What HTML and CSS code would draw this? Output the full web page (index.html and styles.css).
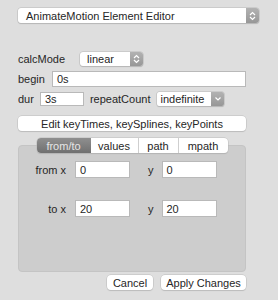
FILE: index.html
```html
<!DOCTYPE html>
<html>
<head>
<meta charset="utf-8">
<link rel="stylesheet" href="styles.css">
</head>
<body>
<div class="win">
  <div class="popup main-popup">
    <span class="popup-text">AnimateMotion Element Editor</span>
    <span class="arrow"><svg width="7" height="10" viewBox="0 0 7 10"><path d="M1 4 L3.5 1.5 L6 4 M1 6 L3.5 8.5 L6 6" fill="none" stroke="#fff" stroke-width="1.2"/></svg></span>
  </div>

  <div class="form">
    <div class="row r-calc">
      <span class="lbl">calcMode</span>
      <div class="popup calc-popup">
        <span class="popup-text">linear</span>
        <span class="arrow"><svg width="7" height="10" viewBox="0 0 7 10"><path d="M1 4 L3.5 1.5 L6 4 M1 6 L3.5 8.5 L6 6" fill="none" stroke="#fff" stroke-width="1.2"/></svg></span>
      </div>
    </div>
    <div class="row r-begin">
      <span class="lbl">begin</span>
      <div class="field begin-field">0s</div>
    </div>
    <div class="row r-dur">
      <span class="lbl">dur</span>
      <div class="field dur-field">3s</div>
      <span class="lbl rc-lbl">repeatCount</span>
      <div class="combo">
        <span class="combo-text">indefinite</span>
        <span class="arrow"><svg width="8" height="6" viewBox="0 0 8 6"><path d="M1.5 1.5 L4 4 L6.5 1.5" fill="none" stroke="#fff" stroke-width="1.2"/></svg></span>
      </div>
    </div>
    <div class="btn wide-btn">Edit keyTimes, keySplines, keyPoints</div>

    <div class="tabs">
      <span class="tab sel">from/to</span>
      <span class="tab">values</span>
      <span class="tab">path</span>
      <span class="tab last">mpath</span>
    </div>
    <div class="panel">
      <div class="prow">
        <span class="plbl">from x</span>
        <div class="field pf">0</div>
        <span class="ylbl">y</span>
        <div class="field pf">0</div>
      </div>
      <div class="prow to-row">
        <span class="plbl">to x</span>
        <div class="field pf">20</div>
        <span class="ylbl">y</span>
        <div class="field pf">20</div>
      </div>
    </div>

    <div class="actions">
      <div class="btn cancel">Cancel</div>
      <div class="btn apply">Apply Changes</div>
    </div>
  </div>
</div>
</body>
</html>
```

FILE: styles.css
```css
html, body {
  margin: 0;
  padding: 0;
  background: #dedede;
  font-family: "Liberation Sans", Arial, sans-serif;
  font-size: 11px;
  color: #262626;
}
.win {
  width: 278px;
  height: 300px;
  padding-top: 8px;
  box-sizing: border-box;
}
.popup, .combo {
  display: flex;
  align-items: stretch;
  background: #fff;
  border-radius: 3px;
  box-shadow: 0 0 0 0.5px #b8b8b8, 0 1px 1px rgba(0,0,0,0.18);
  overflow: hidden;
  box-sizing: border-box;
}
.popup-text, .combo-text {
  flex: 1;
  display: flex;
  align-items: center;
  white-space: nowrap;
}
.arrow {
  width: 13px;
  display: flex;
  align-items: center;
  justify-content: center;
  background: linear-gradient(#b2b2b2, #979797);
}
.main-popup {
  margin-left: 18px;
  width: 241px;
  height: 15px;
}
.main-popup .popup-text {
  padding-left: 8px;
  font-size: 11px;
}
.form {
  margin-left: 18px;
  width: 228px;
  display: flex;
  flex-direction: column;
}
.row {
  display: flex;
  align-items: center;
}
.lbl {
  font-size: 11px;
  white-space: nowrap;
}
.r-calc {
  margin-top: 29px;
  height: 14px;
}
.calc-popup {
  margin-left: 15px;
  width: 63px;
  height: 14px;
}
.calc-popup .popup-text {
  padding-left: 7px;
  font-size: 11px;
}
.field {
  background: #fff;
  border: 1px solid #b9b9b9;
  box-sizing: border-box;
  font-size: 11px;
  display: flex;
  align-items: center;
  padding-left: 4px;
}
.r-begin {
  margin-top: 5px;
}
.begin-field {
  margin-left: 7px;
  width: 194px;
  height: 16px;
}
.r-dur {
  margin-top: 5px;
}
.dur-field {
  margin-left: 6px;
  width: 44px;
  height: 14px;
}
.rc-lbl {
  margin-left: 6px;
}
.combo {
  margin-left: 7px;
  width: 67px;
  height: 14px;
  border-radius: 2px;
}
.combo .combo-text {
  padding-left: 3px;
  font-size: 11px;
}
.btn {
  background: #fff;
  border-radius: 4px;
  box-shadow: 0 0 0 0.5px #bcbcbc, 0 1px 1px rgba(0,0,0,0.15);
  display: flex;
  align-items: center;
  justify-content: center;
  font-size: 11px;
  height: 15px;
  white-space: nowrap;
}
.wide-btn {
  margin-top: 10px;
}
.tabs {
  margin-top: 7px;
  align-self: center;
  display: flex;
  height: 15px;
  margin-bottom: -8px;
  position: relative;
  z-index: 1;
  background: #fff;
  border-radius: 4px;
  box-shadow: 0 0 0 0.5px #bcbcbc, 0 1px 1px rgba(0,0,0,0.15);
  overflow: hidden;
}
.tab {
  display: flex;
  align-items: center;
  justify-content: center;
  font-size: 11px;
  border-right: 1px solid #cfcfcf;
}
.tab.last { border-right: none; }
.tab:nth-child(1) { width: 54px; }
.tab:nth-child(2) { width: 47px; }
.tab:nth-child(3) { width: 39px; }
.tab:nth-child(4) { width: 49px; }
.tab.sel {
  background: linear-gradient(#8f8f8f, #707070);
  color: #e6e6e6;
  border-right: none;
}
.panel {
  height: 127px;
  background: #cdcdcd;
  border: 1px solid #c4c4c4;
  border-radius: 4px;
  box-sizing: border-box;
  padding-top: 15px;
}
.prow {
  display: flex;
  align-items: center;
  height: 17px;
}
.to-row {
  margin-top: 22px;
}
.plbl {
  width: 47px;
  text-align: right;
  font-size: 11px;
}
.pf {
  margin-left: 9px;
  width: 55px;
  height: 17px;
}
.ylbl {
  margin-left: 18px;
  font-size: 11px;
}
.prow .pf + .ylbl + .pf {
  margin-left: 8px;
}
.actions {
  margin-top: 3px;
  display: flex;
  justify-content: flex-end;
  gap: 8px;
}
.cancel { width: 46px; }
.apply { width: 85px; }
```
